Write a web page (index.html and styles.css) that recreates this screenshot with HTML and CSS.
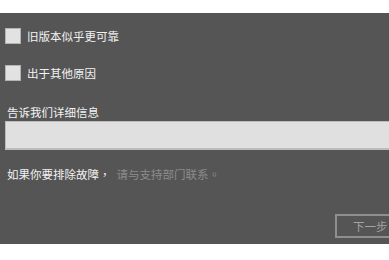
FILE: index.html
```html
<!DOCTYPE html>
<html lang="zh-CN">
<head>
<meta charset="utf-8">
<title>反馈</title>
<link rel="stylesheet" href="styles.css">
</head>
<body>
<div class="top"></div>
<main class="panel">
  <label class="check first"><span class="box"></span><span>旧版本似乎更可靠</span></label>
  <label class="check second"><span class="box"></span><span>出于其他原因</span></label>
  <div class="field-label">告诉我们详细信息</div>
  <div class="input"></div>
  <p class="hint">如果你要排除故障<span class="comma" lang="zh-TW">，</span><span class="muted">请与支持部门联系<span class="comma" lang="zh-TW">。</span></span></p>
  <div class="footer"><button class="next" disabled>下一步</button></div>
</main>
</body>
</html>
```
FILE: styles.css
```css
html, body {
  margin: 0;
  padding: 0;
  background: #ffffff;
  width: 389px;
  height: 260px;
  overflow: hidden;
}
body {
  font-family: "Noto Sans CJK SC", "Noto Sans", sans-serif;
  font-size: 11.5px;
}
.top {
  height: 13px;
}
.panel {
  height: 231px;
  box-sizing: border-box;
  background: #555555;
  color: #f2f2f2;
  padding: 15px 0 0 5px;
  display: flex;
  flex-direction: column;
  overflow: hidden;
}
.check {
  display: flex;
  align-items: center;
  height: 16px;
  line-height: 16px;
  gap: 6px;
}
.second {
  margin-top: 21px;
}
.box {
  width: 16px;
  height: 16px;
  box-sizing: border-box;
  background: #e2e2e2;
  border: 1px solid #b4b4b4;
}
.field-label {
  margin-top: 24px;
  padding-left: 2px;
  line-height: 14px;
  height: 14px;
}
.input {
  margin-top: 2px;
  height: 29px;
  margin-right: -10px;
  box-sizing: border-box;
  background: #e0e0e0;
  border: 1px solid #bcbcbc;
  border-bottom-width: 2px;
}
.hint {
  margin: 16px 0 0;
  padding-left: 2px;
  line-height: 16px;
  height: 16px;
}
.comma {
  font-family: "Noto Sans CJK TC", "Noto Sans CJK SC", sans-serif;
}
.muted {
  color: #8c8c8c;
  margin-left: 6px;
}
.footer {
  margin-top: 32px;
  display: flex;
  justify-content: flex-end;
}
.next {
  width: 74px;
  height: 24px;
  margin-right: -20px;
  box-sizing: border-box;
  background: transparent;
  border: 2px solid #8f8f8f;
  color: #a3a3a3;
  font-family: inherit;
  font-size: 11.5px;
  text-align: left;
  padding: 0 0 0 16px;
  line-height: 20px;
}
```
